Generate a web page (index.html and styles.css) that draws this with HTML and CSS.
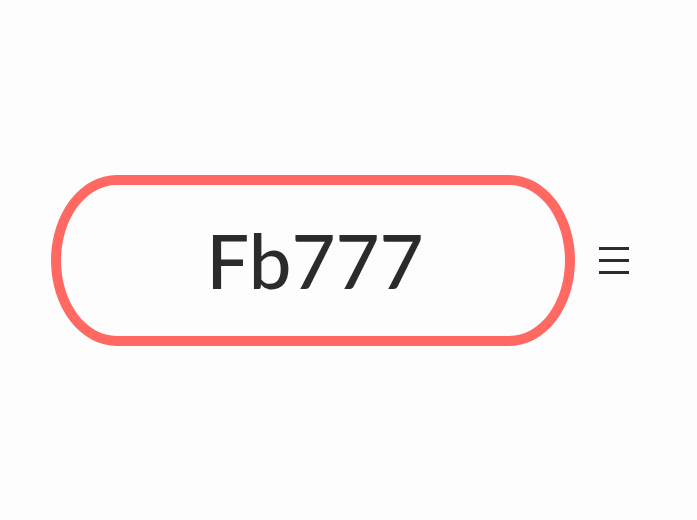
FILE: index.html
```html
<!DOCTYPE html>
<html>
<head>
<meta charset="utf-8">
<link rel="stylesheet" href="styles.css">
</head>
<body>
<div class="page">
  <div class="pill"><span class="label">Fb777</span></div>
  <button class="menu" aria-label="menu">
    <span class="bar"></span>
    <span class="bar"></span>
    <span class="bar"></span>
  </button>
</div>
</body>
</html>
```
FILE: styles.css
```css
html, body {
  margin: 0;
  padding: 0;
  background: #fdfdfd;
}
.page {
  width: 697px;
  height: 520px;
  display: flex;
  align-items: center;
  padding-left: 51px;
  box-sizing: border-box;
  gap: 24px;
}
.pill {
  width: 524px;
  height: 171px;
  box-sizing: border-box;
  border: 10px solid #ff6962;
  border-radius: 66px / 86px;
  display: flex;
  align-items: center;
  justify-content: center;
  background: #fdfdfd;
}
.label {
  font-family: "Lato", "Liberation Sans", sans-serif;
  font-size: 76px;
  font-weight: 500;
  color: #2b2b2b;
  letter-spacing: 0;
  line-height: 1;
  padding-left: 4px;
}
.menu {
  border: 0;
  padding: 0;
  background: none;
  width: 30px;
  display: flex;
  flex-direction: column;
  gap: 9px;
}
.bar {
  display: block;
  width: 30px;
  height: 3px;
  background: #2b2b2b;
}
```
